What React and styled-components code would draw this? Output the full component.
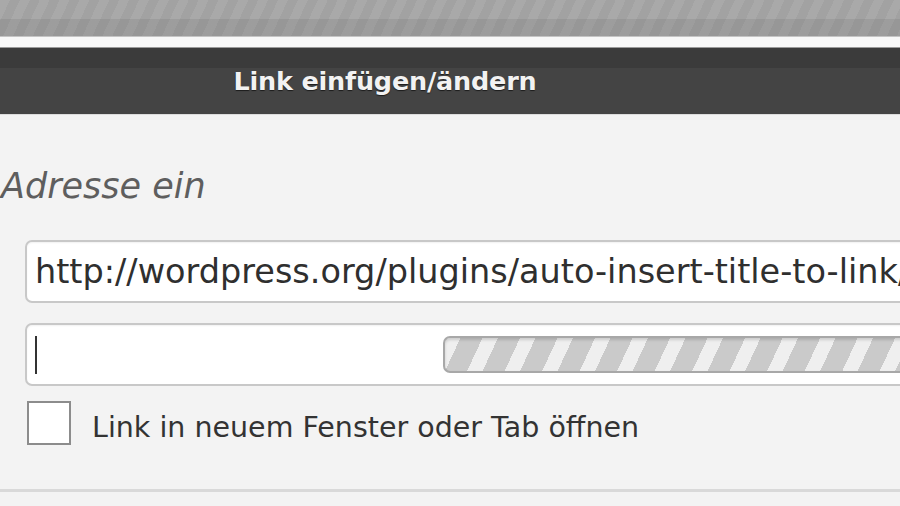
import React from 'react'
import styled, { createGlobalStyle } from 'styled-components'

const GlobalStyle = createGlobalStyle`
  html, body {
    margin: 0;
    padding: 0;
    background: #f3f3f3;
    overflow: hidden;
  }
`

const Page = styled.div`
  width: 900px;
  height: 506px;
  overflow: hidden;
  display: flex;
  flex-direction: column;
  background: #f3f3f3;
  font-family: "DejaVu Sans", Verdana, sans-serif;
`

const Backdrop = styled.div`
  height: 36px;
  flex-shrink: 0;
  background:
    linear-gradient(rgba(0,0,0,0) 0 19px, rgba(0,0,0,0.07) 19px 36px),
    repeating-linear-gradient(115deg, #a9a9a9 0 9px, #a2a2a2 9px 18px);
`

const Frame = styled.div`
  height: 10px;
  flex-shrink: 0;
  background: #f8f8f8;
  border-top: 1px solid #c4c4c4;
  border-bottom: 1px solid #9a9a9a;
`

const TitleBar = styled.div`
  height: 67px;
  flex-shrink: 0;
  background: linear-gradient(#3b3b3b 0 20px, #444444 20px);
  border-bottom: 1px solid #dcdcdc;
  display: flex;
  align-items: center;
  justify-content: center;
  padding-right: 130px;
  box-sizing: border-box;
`

const Title = styled.h1`
  margin: 0;
  font-size: 25.5px;
  font-weight: bold;
  color: #f2f2f2;
  letter-spacing: -0.2px;
  text-shadow: 0 1px 1px rgba(0,0,0,0.6);
`

const Body = styled.div`
  flex: 1;
  display: flex;
  flex-direction: column;
`

const Heading = styled.div`
  margin-top: 51px;
  height: 40px;
  line-height: 40px;
  font-size: 35px;
  font-style: italic;
  color: #5e5e5e;
  padding-left: 1px;
`

const Form = styled.div`
  margin-top: 34px;
  margin-left: -95px;
  margin-right: -80px;
  display: grid;
  grid-template-columns: 120px 1fr;
  row-gap: 20px;
  align-items: center;
`

const Label = styled.label`
  text-align: right;
  padding-right: 30px;
  font-size: 26px;
  color: #333;
  white-space: nowrap;
`

const Field = styled.div`
  height: 63px;
  box-sizing: border-box;
  border: 2px solid #c8c8c8;
  border-radius: 7px;
  background: #fff;
  display: flex;
  align-items: center;
  padding-left: 8px;
  overflow: hidden;
  box-shadow: inset 0 1px 2px rgba(0,0,0,0.06);
`

const Value = styled.span`
  font-size: 33.5px;
  color: #2f2f2f;
  white-space: nowrap;
`

const Caret = styled.span`
  width: 2px;
  height: 38px;
  background: #333;
  flex-shrink: 0;
`

const Spinner = styled.div`
  flex: 1;
  margin-left: 406px;
  height: 37px;
  box-sizing: border-box;
  border: 2px solid #a8a8a8;
  border-right: none;
  border-radius: 7px 0 0 7px;
  background: repeating-linear-gradient(
    115deg,
    #efefef 0 14px,
    #cacaca 14px 34px
  );
  box-shadow: inset 0 2px 3px rgba(0,0,0,0.15);
`

const CheckRow = styled.div`
  grid-column: 2;
  display: flex;
  align-items: center;
  gap: 21px;
  margin-top: -5px;
  padding-left: 2px;
`

const Box = styled.span`
  width: 44px;
  height: 44px;
  box-sizing: border-box;
  border: 2px solid #8c8c8c;
  background: #fff;
  flex-shrink: 0;
`

const CheckLabel = styled.span`
  font-size: 28.5px;
  color: #333;
  padding-top: 8px;
`

const Divider = styled.div`
  margin-top: 44px;
  height: 3px;
  background: #d9d9d9;
`

export default function App() {
  return (
    <>
      <GlobalStyle />
      <Page>
        <Backdrop />
        <Frame />
        <TitleBar>
          <Title>Link einfügen/ändern</Title>
        </TitleBar>
        <Body>
          <Heading>Adresse ein</Heading>
          <Form>
            <Label>URL</Label>
            <Field>
              <Value>http://wordpress.org/plugins/auto-insert-title-to-link/</Value>
            </Field>
            <Label>Titel</Label>
            <Field>
              <Caret />
              <Spinner />
            </Field>
            <CheckRow>
              <Box />
              <CheckLabel>Link in neuem Fenster oder Tab öffnen</CheckLabel>
            </CheckRow>
          </Form>
          <Divider />
        </Body>
      </Page>
    </>
  )
}
